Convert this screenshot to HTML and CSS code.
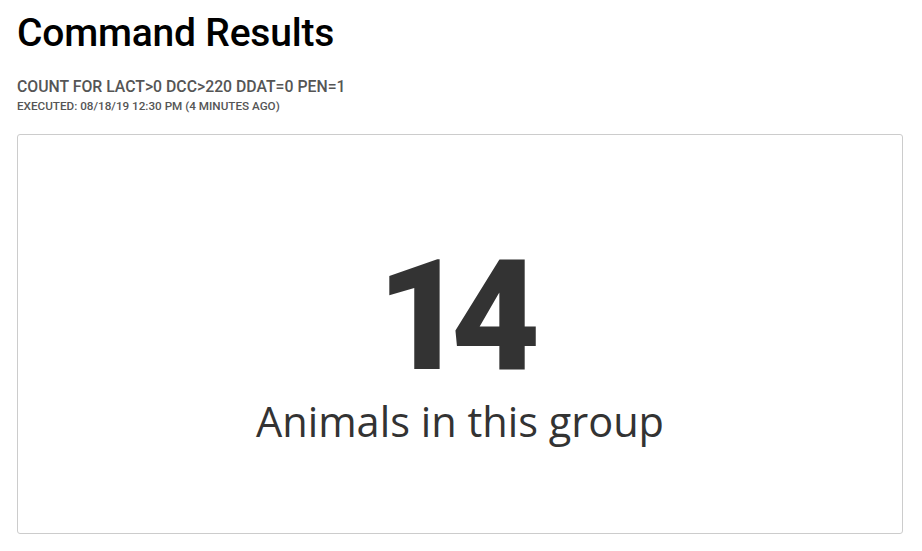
FILE: index.html
```html
<!DOCTYPE html>
<html lang="en">
<head>
  <meta charset="UTF-8">
  <title>Command Results</title>
  <link rel="stylesheet" href="styles.css">
</head>
<body>
  <div class="page">
    <h1 class="title">Command Results</h1>

    <div class="command">
      <div class="command-text">COUNT FOR LACT&gt;0 DCC&gt;220 DDAT=0 PEN=1</div>
      <div class="command-meta">EXECUTED: 08/18/19 12:30 PM (4 MINUTES AGO)</div>
    </div>

    <!-- result card -->
    <div class="result-card">
      <div class="result-count">14</div>
      <div class="result-label">Animals in this group</div>
    </div>
  </div>
</body>
</html>
```

FILE: styles.css
```css
body {
  margin: 0;
  padding: 0;
  background: #ffffff;
  font-family: 'Roboto', sans-serif;
}

.page {
  padding: 11px 19px 0 17px;
}

.title {
  margin: 0;
  font-size: 39px;
  font-weight: 500;
  color: #000000;
  line-height: 44px;
  letter-spacing: -0.2px;
}

.command {
  margin-top: 23px;
  color: #555555;
}

.command-text {
  font-size: 15.8px;
  font-weight: 500;
  line-height: 18px;
}

.command-meta {
  font-size: 11.7px;
  font-weight: 500;
  line-height: 14px;
  margin-top: 3px;
}

/* karta z wynikiem */
.result-card {
  margin-top: 21px;
  height: 400px;
  border: 1px solid #cccccc;
  border-radius: 3px;
  display: flex;
  flex-direction: column;
  align-items: center;
  justify-content: center;
  padding-top: 18px;
  box-sizing: border-box;
  color: #333333;
}

.result-count {
  font-size: 154px;
  font-weight: 900;
  line-height: 154px;
  letter-spacing: -15px;
  margin-left: -18px;
}

.result-label {
  font-family: 'Open Sans', sans-serif;
  font-size: 41.5px;
  line-height: 50px;
  margin-top: 2px;
}
```
